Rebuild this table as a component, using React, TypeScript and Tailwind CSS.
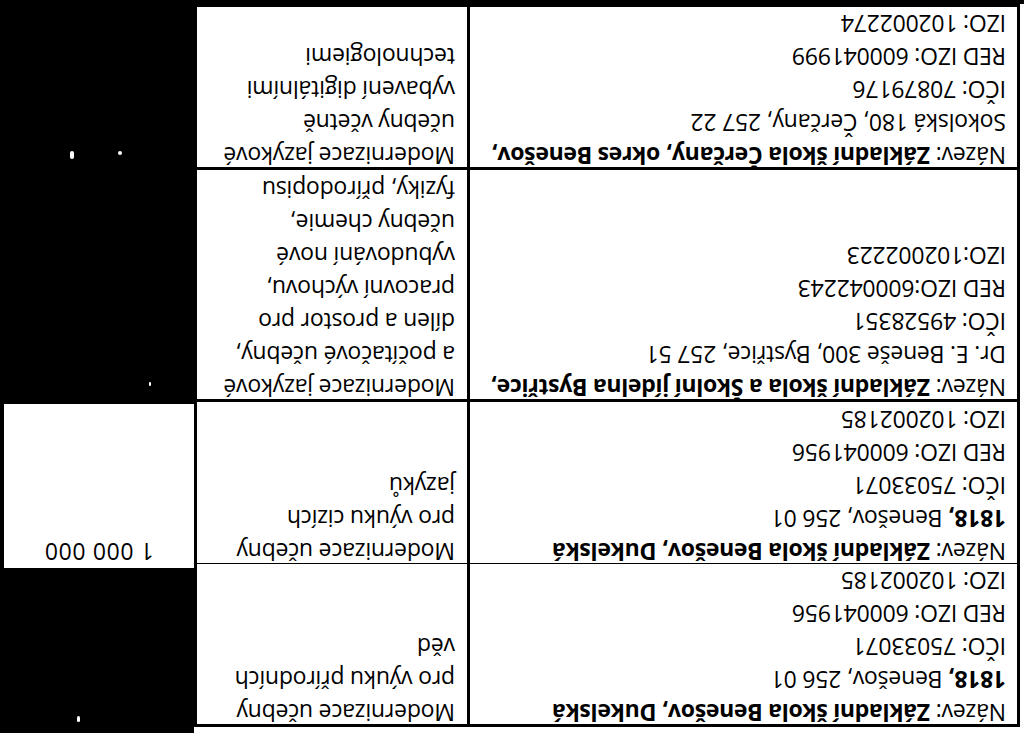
type Line = { bold?: string; text?: string; lead?: string };

interface Row {
  height: string;
  school: Line[];
  project: string[];
  amount?: string;
  specks: { cls: string }[];
}

const rows: Row[] = [
  {
    height: "h-[161px]",
    school: [
      { lead: "Název: ", bold: "Základní škola Benešov, Dukelská" },
      { bold: "1818,", text: " Benešov, 256 01" },
      { text: "IČO: 75033071" },
      { text: "RED IZO: 600041956" },
      { text: "IZO: 102002185" },
    ],
    project: ["Modernizace učebny", "pro výuku přírodních", "věd"],
    specks: [{ cls: "left-[114px] top-[2px] w-[3px] h-[6px] rounded-full" }],
  },
  {
    height: "h-[164px]",
    school: [
      { lead: "Název: ", bold: "Základní škola Benešov, Dukelská" },
      { bold: "1818,", text: " Benešov, 256 01" },
      { text: "IČO: 75033071" },
      { text: "RED IZO: 600041956" },
      { text: "IZO: 102002185" },
    ],
    project: ["Modernizace učebny", "pro výuku cizích", "jazyků"],
    amount: "1 000 000",
    specks: [],
  },
  {
    height: "h-[232px]",
    school: [
      { lead: "Název: ", bold: "Základní škola a Školní jídelna Bystřice," },
      { text: "Dr. E. Beneše 300, Bystřice, 257 51" },
      { text: "IČO: 49528351" },
      { text: "RED IZO:600042243" },
      { text: "IZO:102002223" },
    ],
    project: [
      "Modernizace jazykové",
      "a počítačové učebny,",
      "dílen a prostor pro",
      "pracovní výchovu,",
      "vybudování nové",
      "učebny chemie,",
      "fyziky, přírodopisu",
    ],
    specks: [{ cls: "left-[43px] top-[13px] w-[2px] h-[4px] rounded-full" }],
  },
  {
    height: "h-[163px]",
    school: [
      { lead: "Název: ", bold: "Základní škola Čerčany, okres Benešov," },
      { text: "Sokolská 180, Čerčany, 257 22" },
      { text: "IČO: 70879176" },
      { text: "RED IZO: 600041999" },
      { text: "IZO: 102002274" },
    ],
    project: [
      "Modernizace jazykové",
      "učebny včetně",
      "vybavení digitálními",
      "technologiemi",
    ],
    specks: [
      { cls: "left-[120px] top-[8px] w-[4px] h-[8px] rounded-full" },
      { cls: "left-[72px] top-[12px] w-[4px] h-[4px] rounded-full" },
    ],
  },
];

export default function App() {
  return (
    <div className="w-[1024px] h-[733px] overflow-hidden bg-black">
      {/* the scan is upside down, so build it upright and turn it */}
      <div className="w-full h-full rotate-180 flex flex-col bg-black font-['Open_Sans',sans-serif] font-medium tracking-[-0.2px] text-[23px] leading-[33px] text-black">
        <div className="h-[6px] w-[830px] shrink-0 bg-white" />
        <div className="flex">
          <div className="w-[4px] bg-white" />
          <div className="flex flex-col border-t-[3px] border-l-[3px] border-black">
            {rows.map((row, i) => (
              <div
                key={i}
                className={`grid grid-cols-[550px_273px_194px] ${row.height}`}
              >
                <div className="bg-white border-r-[3px] border-b-[3px] border-black pl-[11px] whitespace-nowrap">
                  <div className="-mt-[5px]">
                    {row.school.map((l, j) => (
                      <div key={j}>
                        {l.lead}
                        {l.bold && (
                          <span className="font-bold tracking-[-0.3px]">
                            {l.bold}
                          </span>
                        )}
                        {l.text}
                      </div>
                    ))}
                  </div>
                </div>
                <div className="bg-white border-r-[3px] border-b-[3px] border-black pl-[12px] whitespace-nowrap">
                  <div className="-mt-[5px]">
                    {row.project.map((p, j) => (
                      <div key={j}>{p}</div>
                    ))}
                  </div>
                </div>
                <div className="relative bg-black pr-[4px]">
                  {row.amount && (
                    <div className="h-full bg-white text-center">
                      <div className="-mt-[5px] tracking-[0.6px]">{row.amount}</div>
                    </div>
                  )}
                  {row.specks.map((s, j) => (
                    <span key={j} className={`absolute bg-white ${s.cls}`} />
                  ))}
                </div>
              </div>
            ))}
          </div>
        </div>
      </div>
    </div>
  );
}
